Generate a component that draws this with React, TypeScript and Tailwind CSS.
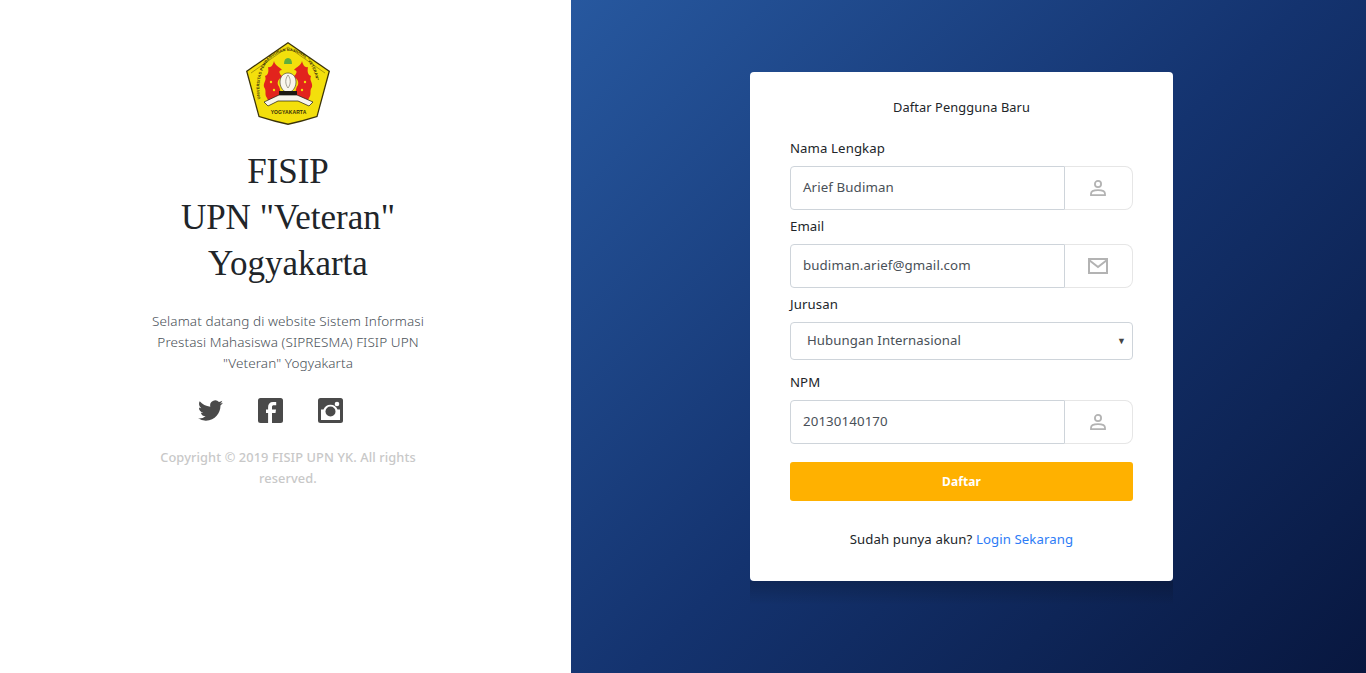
function Logo() {
  return (
    <svg width="84" height="83" viewBox="0 0 84 83" className="block">
      <path d="M42 0 L84 29 L71.500 75 Q56 80 42 83 Q28 80 12.500 75 L0 29 Z" fill="#3a3208" />
      <path d="M42 1.500 L82.500 29.500 L70.500 74 Q56 78.500 42 81.500 Q28 78.500 13.500 74 L1.500 29.500 Z" fill="#f3df0c" />
      <path d="M5 31 L42 5 L79 31" fill="none" stroke="#3a3208" strokeWidth="0.4" />
      <path id="logoArc" d="M15 60 C8 30 24 9 42 9 C60 9 76 30 69 60" fill="none" />
      <text fontSize="3.900" fontWeight="700" fill="#352d0a" fontFamily="'Liberation Sans', sans-serif">
        <textPath href="#logoArc" startOffset="3">UNIVERSITAS PEMBANGUNAN NASIONAL "VETERAN"</textPath>
      </text>
      <path d="M38 22 Q38 16 42 16 Q46 16 46 22 Z" fill="#5fae3c" />
      <path d="M28 19 C29 24 34 25 36 28 C32 28 33 32 37 35 C33 36 31 39 32 43 C35 47 35 53 33 58 C28 62 22 60 21 56 C18 52 21 49 18 45 C17 40 21 39 19 34 C22 33 23 30 22 25 C25 26 27 23 28 19 Z" fill="#e2231d" />
      <path d="M56 19 C55 24 50 25 48 28 C52 28 51 32 47 35 C51 36 53 39 52 43 C49 47 49 53 51 58 C56 62 62 60 63 56 C66 52 63 49 66 45 C67 40 63 39 65 34 C62 33 61 30 62 25 C59 26 57 23 56 19 Z" fill="#e2231d" />
      <circle cx="25" cy="40" r="1.200" fill="#f3df0c" />
      <circle cx="28" cy="48" r="1.200" fill="#f3df0c" />
      <circle cx="59" cy="40" r="1.200" fill="#f3df0c" />
      <circle cx="56" cy="48" r="1.200" fill="#f3df0c" />
      <path d="M42 31 C46 31 50 34 50 40 C50 46 46 50 42 51 C38 50 34 46 34 40 C34 34 38 31 42 31 Z" fill="#f8f6ec" stroke="#4a4336" strokeWidth="0.700" />
      <path d="M42 33 C39 37 39 42 42 46 C45 42 45 37 42 33 Z" fill="none" stroke="#6d6657" strokeWidth="0.600" />
      <path d="M33 49 H51 V58 H33 Z" fill="#1d1a10" />
      <path d="M18 60 L33 53 H51 L67 60 L63 64 L52 59 H32 L22 64 Z" fill="#f8f6ec" stroke="#1d1a10" strokeWidth="0.700" />
      <text x="42.500" y="72" textAnchor="middle" fontSize="5" fontWeight="700" fill="#352d0a" fontFamily="'Liberation Sans', sans-serif">YOGYAKARTA</text>
    </svg>
  );
}

function TwitterIcon() {
  return (
    <svg width="25" height="25" viewBox="0 0 24 24" fill="#4a4a4a">
      <path d="M23.950 4.570a10 10 0 0 1-2.820.770 4.960 4.960 0 0 0 2.160-2.720 9.900 9.900 0 0 1-3.130 1.190 4.920 4.920 0 0 0-8.380 4.480C7.690 8.100 4.070 6.130 1.640 3.160a4.820 4.820 0 0 0-.660 2.470c0 1.710.870 3.210 2.190 4.100a4.900 4.900 0 0 1-2.230-.610v.060a4.920 4.920 0 0 0 3.950 4.830 5 5 0 0 1-2.210.080 4.940 4.940 0 0 0 4.600 3.420A9.870 9.870 0 0 1 0 19.540a14 14 0 0 0 7.560 2.210c9.050 0 14-7.500 14-13.980 0-.210 0-.420-.020-.630a9.940 9.940 0 0 0 2.410-2.570Z" />
    </svg>
  );
}

function FacebookIcon() {
  return (
    <svg width="25" height="25" viewBox="0 0 25 25">
      <rect width="25" height="25" rx="2.500" fill="#4a4a4a" />
      <path d="M14 25V15h3.500l.5-3.500H14V9c0-1.200.5-1.800 2-1.800h2.200V4h-3.100c-3.400 0-5 2-5 5v2.500H8V15h2.100v10Z" fill="#fff" />
    </svg>
  );
}

function InstagramIcon() {
  return (
    <svg width="25" height="25" viewBox="0 0 25 25">
      <rect width="25" height="25" rx="2.500" fill="#4a4a4a" />
      <path d="M3 11.500h2.500a7.500 7.500 0 0 1 14 0H22V22H3Z" fill="#fff" />
      <circle cx="12.500" cy="13.500" r="5" fill="#4a4a4a" />
      <circle cx="19" cy="6" r="2.300" fill="#fff" />
    </svg>
  );
}

function UserIcon() {
  return (
    <svg width="18" height="18" viewBox="0 0 18 18" fill="none" stroke="#b3b3b3" strokeWidth="1.800">
      <circle cx="9" cy="5" r="3.100" />
      <path d="M2 16.100v-1.400c0-2.200 3-3.500 7-3.500s7 1.300 7 3.500v1.400Z" />
    </svg>
  );
}

function MailIcon() {
  return (
    <svg width="22" height="18" viewBox="0 0 22 18" fill="none" stroke="#b3b3b3" strokeWidth="2">
      <rect x="2" y="2" width="18" height="14" />
      <path d="M2 3l9 7 9-7" />
    </svg>
  );
}

function IconInput({ value, icon }: { value: string; icon: React.ReactNode }) {
  return (
    <div className="flex h-[44px]">
      <div className="flex flex-1 items-center rounded-l-[4px] border border-[#ced4da] pl-3 text-[13.300px] text-[#495057]">
        {value}
      </div>
      <div className="flex w-[68px] items-center justify-center rounded-r-[8px] border border-l-0 border-[#e6e6e6] pr-[2px]">
        {icon}
      </div>
    </div>
  );
}

export default function App() {
  return (
    <div className="flex h-[673px] w-full overflow-hidden bg-white font-['Noto_Sans',sans-serif] tracking-[0.1px] text-[#212529]">
      <div className="flex w-[571px] shrink-0 flex-col items-center pl-[5px] pt-[42px]">
        <Logo />
        <h1 className="mt-[24px] text-center font-['Liberation_Serif',serif] text-[35px] leading-[46px] tracking-normal">
          FISIP
          <br />
          UPN "Veteran"
          <br />
          Yogyakarta
        </h1>
        <p className="mt-[24px] w-[300px] text-center text-[13.500px] font-light leading-[21px] text-[#495057]">
          Selamat datang di website Sistem Informasi Prestasi Mahasiswa (SIPRESMA) FISIP UPN "Veteran" Yogyakarta
        </p>
        <div className="mr-[35px] mt-[24px] flex items-center gap-[35px]">
          <TwitterIcon />
          <FacebookIcon />
          <InstagramIcon />
        </div>
        <p className="mt-[24px] w-[280px] text-center text-[12.800px] font-medium leading-[21px] text-[#c8c8c8]">
          Copyright © 2019 FISIP UPN YK. All rights reserved.
        </p>
      </div>

      <div className="flex flex-1 justify-center bg-[linear-gradient(135deg,#27589f_0%,#14336f_50%,#08173f_100%)] pr-[14px] pt-[72px]">
        <div className="relative h-[509px] w-[423px]">
          <div className="absolute inset-x-0 -bottom-[24px] h-[24px] bg-gradient-to-b from-black/20 to-transparent" />
          <div className="relative flex h-full flex-col rounded-[4px] bg-white px-[40px] pt-[25px] text-[13.200px]">
            <div className="text-center text-[12.800px] leading-[21px]">Daftar Pengguna Baru</div>
            <label className="mb-[7px] mt-[20px] block leading-[21px]">Nama Lengkap</label>
            <IconInput value="Arief Budiman" icon={<UserIcon />} />
            <label className="mb-[7px] mt-[6px] block leading-[21px]">Email</label>
            <IconInput value="budiman.arief@gmail.com" icon={<MailIcon />} />
            <label className="mb-[7px] mt-[6px] block leading-[21px]">Jurusan</label>
            <div className="relative flex h-[38px] items-center rounded-[4px] border border-[#ced4da] pl-[16px] text-[#495057]">
              Hubungan Internasional
              <span className="absolute right-[6px] top-[11px] text-[9px] leading-[14px] text-[#444]">▼</span>
            </div>
            <label className="mb-[7px] mt-[12px] block leading-[21px]">NPM</label>
            <IconInput value="20130140170" icon={<UserIcon />} />
            <button className="mt-[18px] h-[39px] rounded-[3px] bg-[#ffb100] text-[12px] font-bold text-white">
              Daftar
            </button>
            <div className="mt-[28px] text-center leading-[21px]">
              Sudah punya akun? <a className="text-[#2d7cf6]">Login Sekarang</a>
            </div>
          </div>
        </div>
      </div>
    </div>
  );
}
